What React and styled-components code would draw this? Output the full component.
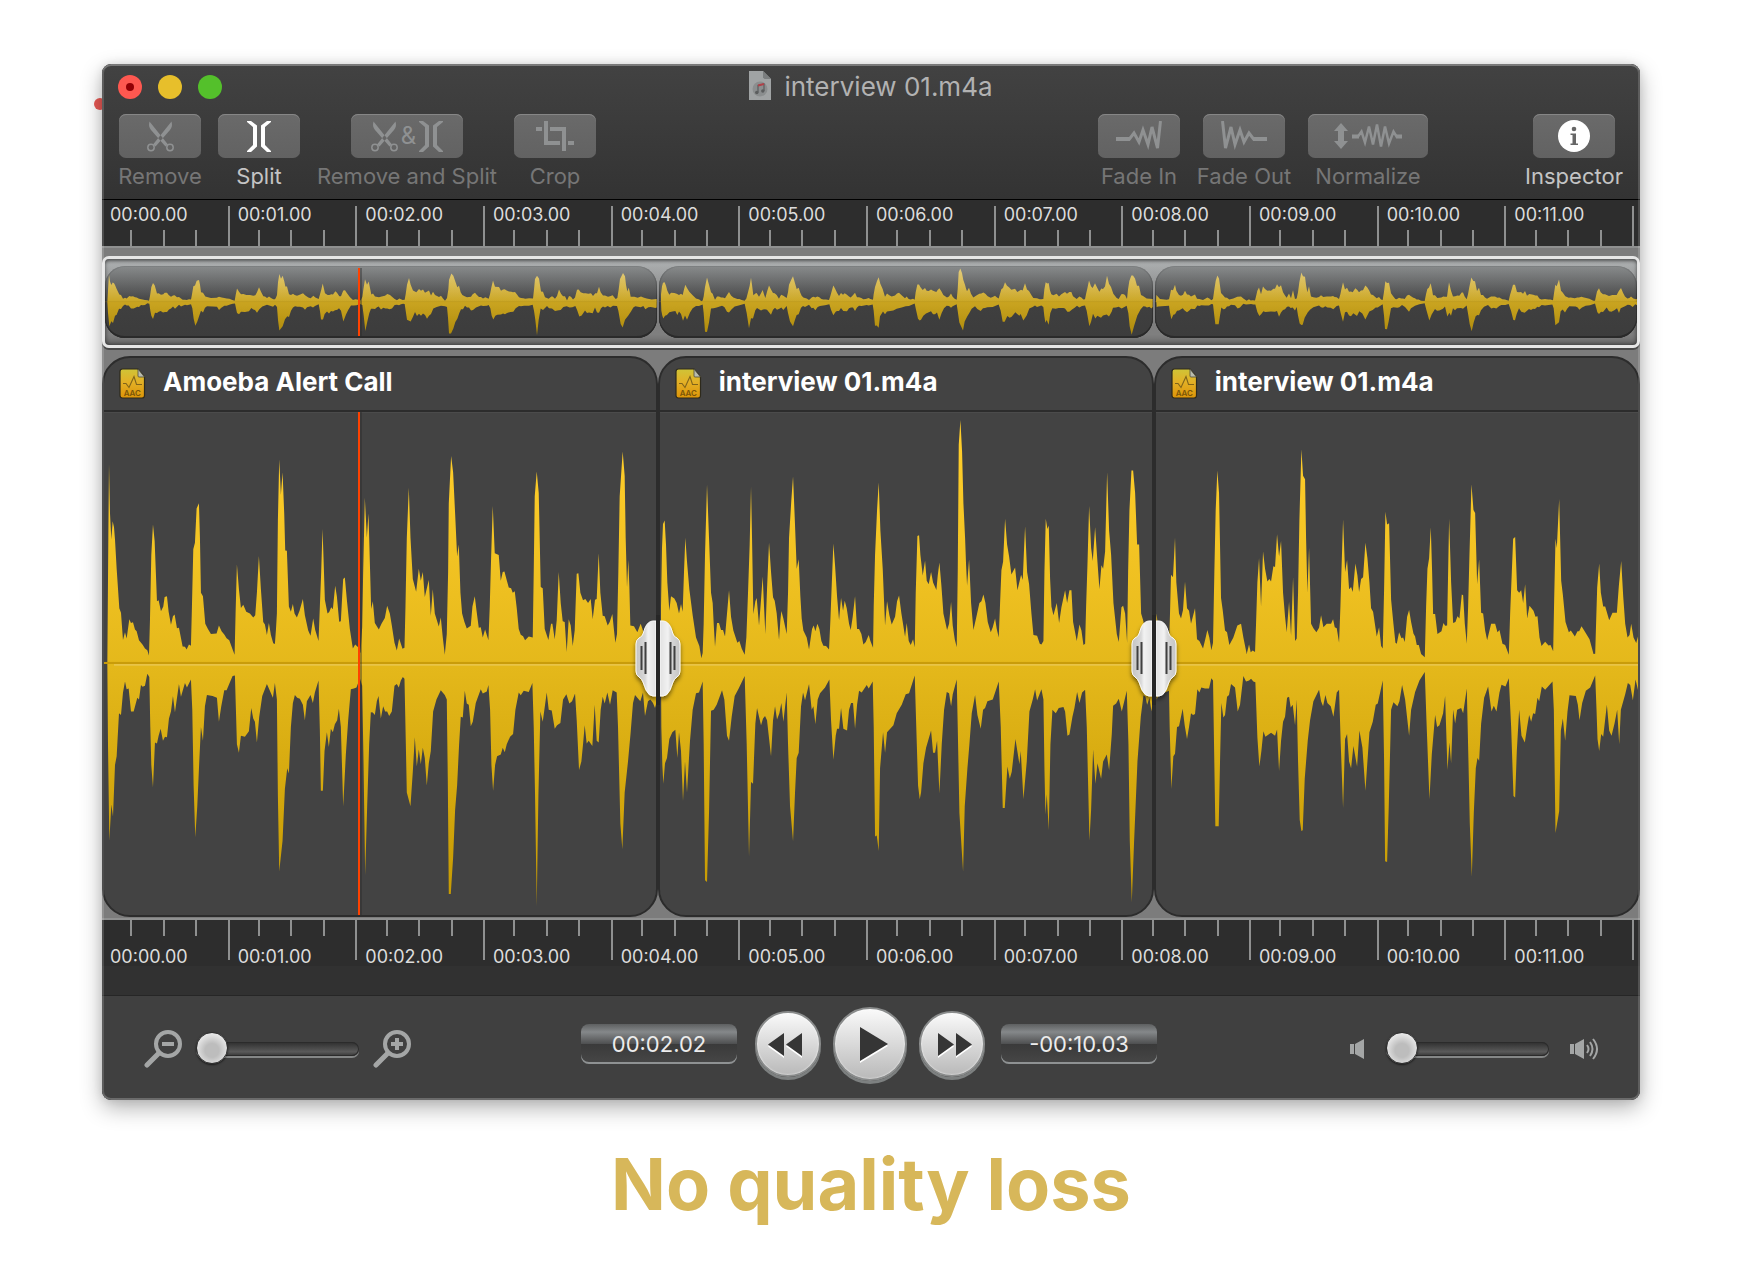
import React from "react";
import styled, { createGlobalStyle } from "styled-components";

const GlobalStyle = createGlobalStyle`
  *, *::before, *::after { box-sizing: border-box; }
  body { margin: 0; background: #fff; font-family: Inter, "Liberation Sans", sans-serif; }
  button { font: inherit; color: inherit; padding: 0; border: 0; background: none; }
`;

/* ---------- waveform data ----------
   Envelope points as "x,y" pairs. Three x units make one pixel of timeline,
   the zero axis lies at y = 766. Each section adds its own x offset. */
const AXIS = 766;

const envelopes = [
  {
    top: [
      [-36, "52,766 55,400 57,187 60,330 64,405 68,352 72,370 75,405 80,490 88,605 93,618 99,697 105,675 110,693 118,637 123,648 129,646 135,667 140,672 147,698 158,711 165,722 172,727 177,742 180,640 184,450 189,362 194,410 201,585 206,582 213,614 220,600 224,572 231,570 236,615 243,653 249,628 254,623 261,663 267,662 278,716 285,717 290,725 297,710 303,714 306,600 310,434 315,415 320,315 327,300 330,400 333,560 339,570 346,650 354,665 363,680 380,678 387,655 395,672 403,681 410,692 418,698 427,722 434,740 437,620 441,478 447,550 453,604 460,595 469,615 480,620 490,632 496,625 501,560 507,453 513,550 520,645 525,652 531,683 537,648 543,683 550,707 555,709 558,670 561,620 564,350 568,172 573,275 578,210 583,330 586,437 591,438 597,600 603,615 609,593 614,620 621,632 629,612 639,578 645,625 655,670 662,685 670,635 676,668 686,700 690,600 694,500 698,375 701,460 705,580 713,620 718,616 724,602 729,608 736,540 741,570 748,644 753,643 757,570 760,520 765,516 771,580 780,665 789,722 796,710 805,718 812,736 817,660 820,500 825,284 831,400 836,330 840,470"],
      [804, "4,607 9,585 15,648 27,667 35,650 45,633 52,598 60,620 66,655 74,705 81,728 88,693 98,723 104,720 107,600 111,400 117,255 122,400 129,520 139,557 147,490 153,525 159,500 165,572 177,523 183,627 189,550 195,620 207,658 213,632 219,690 225,740 231,680 235,500 237,300 244,163 250,210 256,330 262,455 267,420 272,560 277,620 284,645 291,664 303,656 308,600 315,570 320,610 327,662 333,660 339,690 346,667 356,698 360,600 364,460 369,308 375,445 387,450 393,525 399,500 404,498 410,520 417,545 424,547 429,560 435,556 441,605 447,665 453,682 460,686 466,698 477,687 489,690 492,500 495,280 501,208 507,270 513,543 519,547 525,665 536,697 544,650 548,650 555,695 561,640 567,500 573,590 579,643 585,645 591,732 597,637 603,655 609,715 615,670 621,505 626,503 632,560 640,582 647,578 655,590 663,578 669,637 676,580 681,578 687,445 692,560 699,627 705,628 714,655 720,645 728,622 732,660 737,705 742,680 746,500 750,280 759,150 765,220 768,400 772,545 776,465 779,540 782,655 793,657 803,675 813,650 820,670 830,690 845,715 860,700"],
    ],
    bottom: [
      [-36, "52,766 54,1000 58,1280 64,1175 69,1210 75,1060 80,1035 87,910 93,915 99,850 105,818 110,840 116,838 123,905 131,905 142,865 147,870 153,828 158,833 165,830 172,795 178,805 181,950 184,1060 189,1125 195,995 201,998 206,975 212,955 219,990 225,978 231,980 237,925 243,905 249,860 255,907 267,825 273,862 285,822 291,835 303,812 307,900 311,1120 316,1270 322,1180 328,1050 333,950 339,990 345,890 351,857 368,860 381,865 387,935 394,890 403,843 410,843 420,820 428,802 435,800 438,900 441,1000 447,1025 453,975 465,978 477,962 484,895 490,925 495,935 501,995 508,920 517,860 531,825 538,840 549,865 555,822 561,870 564,1150 568,1370 578,1280 585,1130 592,1070 597,1085 603,950 609,880 615,857 622,865 630,868 639,885 645,930 651,875 662,857 669,880 675,850 686,815 690,960 693,1135 699,1135 704,1020 711,965 717,1008 723,955 729,965 735,942 742,930 747,897 753,950 760,1180 768,1030 775,930 783,840 792,838 800,835 810,808 817,830 821,1050 826,1380 832,1180 838,1000 843,907 849,908"],
      [804, "15,915 21,875 26,860 33,925 40,890 46,905 52,905 58,918 66,905 74,830 81,825 87,835 93,815 99,805 104,810 107,950 111,1140 122,1180 129,1080 135,980 141,1065 147,1015 153,1058 159,1010 165,1040 171,1120 177,1055 183,1020 190,905 200,870 213,843 225,857 231,870 234,1100 237,1435 243,1435 250,1330 256,1190 262,1120 268,1000 273,920 279,922 285,845 291,882 297,885 303,948 309,935 318,880 333,840 339,853 351,847 356,828 361,900 365,1060 370,1135 376,1060 382,1035 393,1030 399,1010 405,1023 411,1000 421,978 430,970 437,900 447,850 453,858 462,845 477,848 488,822 492,950 496,1150 501,1470 506,1150 512,905 519,935 531,850 537,900 546,902 555,955 562,945 572,938 580,870 590,855 599,882 607,875 616,853 621,930 628,1075 635,1050 640,1000 645,945 651,998 657,990 668,1005 675,885 681,990 687,995 693,900 699,862 705,882 713,850 721,885 729,843 741,850 745,950 752,1230 758,1305 765,1140 775,1050 783,965 790,880 796,857 812,875 820,850 826,918 835,875 842,870 850,880 856,895 860,880"],
    ],
  },
  {
    top: [
      [1614, "63,766 63,600 66,430 69,360 74,350 78,420 82,530 88,612 93,570 103,577 110,590 117,620 123,593 128,615 132,500 136,400 141,470 148,550 158,625 168,690 178,715 184,750 188,735 191,650 195,450 201,246 207,400 213,560 218,590 221,650 225,717 231,648 237,648 243,668 249,668 255,687 261,620 267,553 273,630 280,670 292,705 298,700 305,722 314,740 319,690 324,560 329,420 333,253 336,400 340,622 346,585 350,575 357,655 363,580 368,513 372,600 376,680 381,550 387,415 393,500 399,573 404,583 410,620 417,697 421,640 424,613 430,635 440,680 444,560 447,400 454,290 459,222 464,340 470,490 476,463 481,570 485,635 490,670 500,690 507,725 516,665 521,655 526,672 532,650 538,665 544,700 550,714 558,715 567,725 571,640 575,540 580,417 585,480 591,570 597,640 603,575 609,612 614,583 620,605 627,650 632,668 638,630 645,570 651,665 657,665 664,680 670,710 677,703 686,683 691,700 699,720 701,600 705,450 711,320 716,240 721,380 728,490 735,655 741,585 748,625 755,652 765,630 771,585 777,568 784,620 795,688 800,648 806,700 812,712 819,695"],
      [2394, "44,718 47,560 52,395 57,393 61,450 68,510 75,467 80,525 86,535 93,500 99,530 109,552 113,510 118,472 124,540 130,620 141,668 147,650 153,587 158,655 164,695 170,718 173,500 176,130 181,58 186,150 190,300 195,400 198,480 201,540 207,463 213,590 220,668 229,630 238,590 244,585 250,565 256,590 263,645 272,675 278,660 285,635 290,665 296,690 300,590 304,495 309,470 315,345 321,420 327,455 334,507 345,487 352,553 363,508 368,523 372,430 375,367 381,500 387,535 394,620 400,683 411,685 419,708 424,710 430,700 433,500 437,345 442,375 446,365 450,520 454,600 460,625 470,590 477,648 484,602 495,553 501,590 508,553 514,553 519,645 530,700 538,652 544,670 550,712 555,708 558,600 562,480 567,308 573,430 578,468 585,370 592,470 598,550 604,480 609,490 615,440 621,210 627,380 633,450 640,590 650,680 656,703 661,640 664,602 669,598 675,620 681,705 684,500 688,320 694,205 699,205 705,270 711,420 717,420 723,620 729,640 740,690 758,700"],
    ],
    bottom: [
      [1614, "63,766 64,950 67,1060 70,1115 75,1055 81,1040 88,985 97,965 106,958 112,1040 117,965 123,1020 129,1165 135,1050 141,1140 150,990 158,900 168,852 177,850 188,818 191,1000 195,1395 201,1400 207,1200 213,903 221,900 230,885 246,843 253,870 261,975 267,990 275,920 284,860 296,838 314,802 320,1000 327,1325 333,1110 339,1115 346,940 351,895 357,920 363,945 369,925 375,918 381,930 393,1035 399,930 405,890 411,928 418,910 424,880 430,935 440,850 444,1000 450,1180 459,1282 465,1140 470,1040 476,1025 483,890 489,850 495,872 507,825 515,900 520,890 526,942 533,870 540,852 555,835 568,812 573,930 580,1045 587,975 591,955 597,955 603,895 610,955 621,960 627,900 633,880 639,880 645,955 651,885 657,845 665,850 680,828 686,838 698,818 701,950 705,1268 710,1265 716,1310 720,1070 729,965 735,1025 741,965 760,945 770,910 785,885 797,855 807,852"],
      [2394, "44,800 48,930 54,1120 59,1160 63,1140 70,1055 78,1010 93,960 99,1025 105,1025 111,990 118,1143 125,1000 132,900 140,848 147,852 153,890 158,855 170,812 173,950 178,1200 189,1370 194,1180 202,1070 208,1000 215,910 225,857 232,915 242,955 249,900 255,895 262,875 278,870 296,818 302,950 308,1185 314,1185 322,1065 329,1100 335,1080 346,985 358,1058 362,1020 370,1160 380,1050 388,905 398,870 405,840 411,873 424,840 430,870 433,1070 436,1205 440,1145 446,1250 451,1000 457,900 467,910 476,895 490,892 495,905 502,975 508,972 517,920 523,895 531,848 538,880 546,850 555,842 560,950 568,1280 573,1190 579,1015 586,1115 592,1055 603,1100 609,1050 620,1030 627,1075 635,970 639,888 648,882 656,868 665,905 680,845 685,1000 689,1280 695,1460 702,1280 712,1050 722,920 730,858 736,862 741,885 748,865 754,905 758,870"],
    ],
  },
  {
    top: [
      [3084, "78,766 79,620 82,640 90,700 110,720 117,710 120,620 123,508 129,515 135,400 139,530 147,620 153,635 159,610 165,528 171,605 177,612 183,650 195,605 201,695 208,700 219,722 227,690 232,668 238,690 244,727 249,705 253,500 257,320 262,205 267,270 273,575 278,610 285,670 291,675 298,712 310,690 322,655 333,650 340,690 350,738 357,710 362,733 368,728 375,732 378,650 382,530 387,460 393,600 399,440 405,490 412,527 418,520 423,527 430,483 435,485 441,390 447,455 453,410 459,560 465,630 470,675 477,587 483,685 489,515 495,700 500,693 504,560 508,350 514,143 519,220 525,230 528,400 532,560 537,430 543,650 550,663 559,675 567,662 573,625 580,660 590,650 603,650 609,637 614,660 620,663 627,705 631,600 634,500 639,347 645,500 651,465 657,550 663,543 668,558 676,475 682,510 687,558 693,520 699,515 706,415 712,460 718,530 723,605 729,615 740,687 747,660 753,715 758,722 762,550"],
      [3834, "16,325 21,362 27,358 33,580 40,650 46,705 50,708 57,675 64,692 69,690 74,703 81,630 87,610 93,645 100,678 105,687 110,712 116,712 123,738 134,747 138,600 142,490 147,460 152,370 156,500 159,622 165,622 172,680 184,672 190,648 195,656 201,655 204,500 207,345 213,530 219,648 226,645 232,628 238,635 245,565 249,567 254,650 260,708 264,600 268,450 274,245 280,320 285,328 291,535 297,463 303,618 309,620 315,670 321,698 333,650 345,650 352,675 358,668 367,708 375,712 386,740 390,620 395,500 399,403 405,398 411,553 417,560 423,553 429,590 435,535 441,635 448,598 460,612 466,630 472,628 478,690 484,715 495,702 505,713 511,712 519,730 522,580 526,403 530,430 537,288 543,525 548,565 556,645 566,675 572,670 584,687 592,672 597,672 604,657 612,670 628,695 640,738 645,737 648,640 651,545 657,475 662,560 669,600 675,600 687,640 697,618 710,618 716,540 723,468 729,570 735,650 742,690 748,683 753,650 760,690 768,706 774,685"],
    ],
    bottom: [
      [3084, "79,766 80,870 85,860 105,850 117,845 119,950 124,1130 130,1035 135,1028 141,950 147,948 158,897 164,945 171,985 177,950 183,910 189,915 195,912 202,840 208,850 214,835 225,838 237,838 244,808 249,815 252,1000 256,1238 266,1238 270,1050 274,880 280,922 285,915 291,862 297,857 303,825 315,835 323,905 330,885 340,802 348,818 357,815 363,810 370,818 376,820 382,980 388,1065 394,1020 400,962 406,978 423,967 435,975 441,957 447,1078 453,990 459,935 465,920 471,865 477,862 482,893 488,885 495,945 500,870 504,1050 509,1220 514,1252 518,1250 524,1100 533,990 540,930 550,875 567,842 573,875 579,890 586,857 592,880 602,890 610,920 620,850 627,842 632,1000 639,1185 645,985 651,970 657,1050 663,1070 670,1005 681,1065 688,960 697,1010 706,1135 712,1050 718,965 728,935 737,885 743,882"],
      [3834, "8,815 12,1050 15,1340 21,1342 26,1180 33,900 40,878 52,890 58,875 66,828 75,870 87,975 93,900 105,848 118,815 134,790 139,930 148,1160 155,1030 165,915 171,950 178,945 189,910 195,860 202,1075 208,995 213,1055 219,900 225,940 231,900 243,895 249,910 260,838 265,1050 269,1230 275,1385 281,1200 287,1070 292,1040 297,1048 303,940 312,865 324,832 334,905 341,888 349,905 358,850 364,827 376,832 386,808 393,950 400,1150 405,1155 410,1020 417,900 424,975 434,995 441,950 447,915 453,935 459,910 465,912 472,865 477,875 485,832 495,842 517,818 521,900 526,1258 537,1195 542,960 548,925 555,990 562,905 568,858 587,860 593,885 598,930 606,880 617,845 630,835 645,800 649,900 652,985 657,1020 663,970 669,978 680,885 687,960 694,975 703,940 711,900 717,1000 722,900 735,855 743,822 750,828 758,872 766,812 774,845"],
    ],
  },
];

const readSections = (sections) =>
  sections.flatMap(([offset, text]) =>
    text.split(" ").map((pair) => {
      const [x, y] = pair.split(",").map(Number);
      return [x + offset, y];
    })
  );

const outline = ({ top, bottom }) => {
  const upper = readSections(top);
  const lower = readSections(bottom).reverse();
  return [...upper, [lower[0][0], AXIS], ...lower].map((p) => p.join(",")).join(" ");
};

const clips = [
  { id: "a", name: "Amoeba Alert Call", grow: 556, view: [6, 1656], mini: [9, 1656], miniGrow: 552 },
  { id: "b", name: "interview 01.m4a", grow: 496, view: [1674, 1476], mini: [1671, 1482], miniGrow: 494 },
  { id: "c", name: "interview 01.m4a", grow: 486, view: [3162, 1446], mini: [3159, 1446], miniGrow: 482 },
].map((clip, i) => ({ ...clip, points: outline(envelopes[i]) }));

const seconds = Array.from({ length: 12 }, (_, i) => `00:${String(i).padStart(2, "0")}.00`);

/* ---------- page and window ---------- */
const Page = styled.main`
  padding: 64px 100px 0 102px;
`;
const Stage = styled.div`
  position: relative;
`;
const StrayDot = styled.span`
  position: absolute;
  left: -8px;
  top: 34px;
  width: 12px;
  height: 12px;
  border-radius: 50%;
  background: #ea5a55;
`;
const Window = styled.section`
  position: relative;
  overflow: hidden;
  border-radius: 9px;
  background: #3f3f3f;
  box-shadow: 0 8px 22px rgba(0, 0, 0, 0.3), 0 0 10px rgba(0, 0, 0, 0.1);
  &::after {
    content: "";
    position: absolute;
    inset: 0;
    border-radius: 9px;
    box-shadow: inset 0 0 0 2px rgba(255, 255, 255, 0.16), inset 0 2px 0 rgba(255, 255, 255, 0.16),
      inset 0 -2px 0 rgba(255, 255, 255, 0.08);
    pointer-events: none;
    z-index: 5;
  }
`;
const Header = styled.header`
  padding: 7px 0 10px;
  border-bottom: 1px solid #000;
  background: linear-gradient(#424242, #333);
`;
const TitleRow = styled.div`
  display: grid;
  grid-template-columns: 1fr auto 1fr;
  align-items: center;
  height: 30px;
  padding: 0 16px;
`;
const Lights = styled.div`
  display: flex;
  gap: 16px;
`;
const Light = styled.button`
  display: grid;
  place-items: center;
  width: 24px;
  height: 24px;
  border-radius: 50%;
  background: ${(p) => p.$color};
  &::before {
    content: "";
    width: 8px;
    height: 8px;
    border-radius: 50%;
    background: ${(p) => p.$dot || "transparent"};
  }
`;
const Title = styled.h1`
  display: flex;
  align-items: flex-start;
  gap: 13px;
  margin: 0;
  font-size: 26px;
  line-height: 32px;
  font-weight: 400;
  color: #b2b2b2;
`;

/* ---------- toolbar ---------- */
const Toolbar = styled.div`
  display: flex;
  justify-content: space-between;
  margin-top: 13px;
  padding: 0 17px;
`;
const ToolGroup = styled.div`
  display: flex;
  gap: 17px;
`;
const Tool = styled.button`
  display: flex;
  flex-direction: column;
  align-items: center;
  gap: 5px;
  width: ${(p) => p.$width}px;
  margin-left: ${(p) => (p.$apart ? 80 : 0)}px;
  font-size: 22px;
  line-height: 26px;
  white-space: nowrap;
  color: ${(p) => (p.disabled ? "#767676" : "#c4c4c4")};
`;
const Face = styled.span`
  display: flex;
  align-items: center;
  justify-content: center;
  gap: 3px;
  width: ${(p) => p.$width}px;
  height: 44px;
  border-radius: 7px;
  background: linear-gradient(#6a6a6a, #626262);
  box-shadow: inset 0 1px 0 #868686;
  font-size: 24px;
  color: ${(p) => (p.$active ? "#fff" : "#8f9192")};
`;

/* ---------- rulers ---------- */
const Ruler = styled.div`
  display: grid;
  grid-template-columns: repeat(12, 16fr) 1fr;
  margin-left: -2px;
  padding: ${(p) => (p.$flip ? "0 0 6px" : "6px 0 0")};
  background: #2d2d2d;
  border-style: solid;
  border-color: #8f9090;
  border-width: ${(p) => (p.$flip ? "2px 0 0" : "0 0 2px")};
`;
const Second = styled.div`
  display: flex;
  flex-direction: ${(p) => (p.$flip ? "column-reverse" : "column")};
  justify-content: space-between;
  height: 40px;
  border-left: 2px solid #8f9090;
`;
const Stamp = styled.span`
  padding-left: 8px;
  margin-bottom: ${(p) => (p.$flip ? -6 : 0)}px;
  font-size: 18px;
  line-height: 18px;
  color: #dcdcdc;
`;
const Quarters = styled.div`
  display: grid;
  grid-template-columns: repeat(4, 1fr);
  height: 16px;
  margin-left: -4px;
`;
const Quarter = styled.i`
  border-left: 2px solid #8f9090;
  &:first-child { border-color: transparent; }
`;
const RulerFoot = styled.div`
  height: 30px;
  background: #313131;
  border-bottom: 1px solid #262626;
`;

/* ---------- timeline ---------- */
const Timeline = styled.div`
  display: flex;
  flex-direction: column;
  gap: 8px;
  padding: 8px 0 1px;
  background: #7c7c7c;
`;
const Overview = styled.div`
  position: relative;
  display: flex;
  gap: 2px;
  padding: 7px 0;
  border: 3px solid #e6e6e6;
  border-radius: 7px;
  background: linear-gradient(#7c7c7c 0%, #7f7f7f 88%, #686868 100%);
  box-shadow: 0 2px 0 #484848, inset 0 0 5px rgba(0, 0, 0, 0.6);
  &::after {
    content: "";
    position: absolute;
    inset: 0 0 50% 0;
    border-radius: 4px 4px 0 0;
    background: linear-gradient(rgba(222, 228, 230, 0.36), rgba(222, 228, 230, 0.46) 14%, rgba(222, 228, 230, 0.02));
    box-shadow: inset 0 2px 3px rgba(0, 0, 0, 0.35);
    pointer-events: none;
  }
`;
const MiniClip = styled.div`
  flex: ${(p) => p.$grow} 1 0;
  height: 72px;
  border-radius: 20px;
  background: linear-gradient(#434343, #3c3c3c);
  box-shadow: inset 0 -2px 0 #2a2a2a, inset 0 0 0 1px #303030;
`;
const Wave = styled.svg`
  display: block;
  width: 100%;
  height: 100%;
  opacity: ${(p) => p.$opacity || 1};
`;
const Playhead = styled.i`
  position: absolute;
  z-index: 1;
  left: ${(p) => p.$at};
  top: ${(p) => p.$inset}px;
  bottom: ${(p) => p.$inset}px;
  width: 2px;
  background: #ff4200;
  box-shadow: 2px 0 0 rgba(40, 40, 40, 0.4);
`;
const Clips = styled.div`
  display: flex;
`;
const Clip = styled.article`
  position: relative;
  flex: ${(p) => p.$grow} 1 0;
  border: 2px solid #2c2c2c;
  border-radius: 28px;
  background: #434343;
`;
const ClipHeader = styled.div`
  display: flex;
  align-items: center;
  gap: 17px;
  height: 54px;
  padding: 0 0 2px 15px;
  border-bottom: 2px solid #2c2c2c;
`;
const ClipName = styled.h2`
  margin: 0;
  padding-bottom: 2px;
  font-size: 26px;
  line-height: 30px;
  font-weight: 700;
  color: #fff;
`;
const ClipBody = styled.div`
  position: relative;
  height: 503px;
  border-radius: 0 0 26px 26px;
  box-shadow: inset 0 1px 0 #4b4b4b;
`;
const Grip = styled.button`
  position: absolute;
  z-index: 3;
  left: -30px;
  top: 257px;
  width: 56px;
  height: 90px;
`;

/* ---------- transport ---------- */
const Transport = styled.footer`
  display: grid;
  grid-template-columns: 1fr auto 1fr;
  align-items: center;
  height: 104px;
  padding: 0 41px 8px 42px;
  background: #404040;
`;
const SliderGroup = styled.div`
  display: flex;
  align-items: center;
  justify-content: ${(p) => (p.$end ? "flex-end" : "flex-start")};
  gap: ${(p) => (p.$end ? 21 : 14)}px;
  padding-top: 10px;
`;
const Slider = styled.input`
  appearance: none;
  width: 163px;
  height: 32px;
  margin: 0;
  background: none;
  &::-webkit-slider-runnable-track {
    height: 14px;
    border-radius: 7px;
    background: linear-gradient(#2e2e2e, #5a5a5a 70%, #353535);
    box-shadow: inset 0 0 0 1px #2b2b2b, 0 2px 0 #858787;
  }
  &::-webkit-slider-thumb {
    appearance: none;
    width: 32px;
    height: 32px;
    margin-top: -10px;
    border-radius: 50%;
    border: 1px solid #2f2f2f;
    background: radial-gradient(circle at 50% 58%, #bdbdbd 30%, #dedede 62%, #fff);
    box-shadow: 0 1px 2px rgba(0, 0, 0, 0.6);
  }
`;
const Center = styled.div`
  display: flex;
  align-items: center;
  gap: 12px;
  margin-right: 5px;
`;
const Time = styled.output`
  width: 156px;
  height: 40px;
  margin: 0 ${(p) => (p.$last ? 0 : 6)}px 0 ${(p) => (p.$last ? 4 : 0)}px;
  border-radius: 8px;
  background: linear-gradient(#5e6061, #85888a 20%, #4e4f50 50%, #3a3a3a 51%, #474747);
  box-shadow: inset 0 -2px 0 #8f9293;
  text-align: center;
  font-size: 22px;
  line-height: 40px;
  color: #ececec;
`;
const RoundButton = styled.button`
  display: grid;
  place-items: center;
  width: ${(p) => p.$size}px;
  height: ${(p) => p.$size}px;
  border: 2px solid #8a8c8c;
  border-radius: 50%;
  background: linear-gradient(#fafafa, #b9b9b9);
  box-shadow: 0 3px 0 #7d8080, inset 0 0 2px #fff;
`;
const Caption = styled.p`
  margin: 40px 0 0;
  text-align: center;
  font-size: 72px;
  line-height: 88px;
  font-weight: 700;
  color: #d7b75a;
`;

/* ---------- drawings ---------- */
const Scissors = () => (
  <svg width="27" height="31" viewBox="0 0 27 31" fill="none" aria-hidden="true">
    <path d="M2.500.5C1.500 4 2 6.500 4 9L18.500 25.500l2.500-2zM24.500.5c1 3.500.5 6-1.500 8.500L8.500 25.500l-2.500-2z" fill="currentColor" />
    <circle cx="4" cy="26.500" r="3.200" stroke="currentColor" strokeWidth="1.500" />
    <circle cx="23" cy="26.500" r="3.200" stroke="currentColor" strokeWidth="1.500" />
  </svg>
);
const Brackets = () => (
  <svg width="24" height="31" viewBox="0 0 24 31" fill="currentColor" aria-hidden="true">
    <path d="M0 0h4l6 4.500v21L4 31H0v-1l6-6V6L0 1zM24 0h-4l-6 4.500v21l6 5.500h4v-1l-6-6V6l6-5z" />
  </svg>
);
const CropIcon = () => (
  <svg width="38" height="30" viewBox="0 0 38 30" fill="currentColor" aria-hidden="true">
    <path d="M0 6h6v4H0zM8 0h4v20h12v4H8zM14 6h16v24h-4V10H14zM32 20h6v4h-6z" />
  </svg>
);
const FadeIcon = ({ out }) => (
  <svg width="46" height="31" viewBox="0 0 46 31" fill="none" stroke="currentColor" aria-hidden="true">
    <g transform={out ? "matrix(-1 0 0 1 46 0)" : undefined}>
      <path d="M0 18h13.500l4.500-6 5 9 4-12 5 14.500L36 6l5.500 21L44.500 0" strokeWidth="3" />
      <path d="M0 18h14" strokeWidth="4" />
    </g>
  </svg>
);
const NormalizeIcon = () => (
  <svg width="68" height="31" viewBox="0 0 68 31" fill="none" aria-hidden="true">
    <path d="M7 2l7 8h-4v10h4l-7 8-7-8h4V10H0z" fill="currentColor" />
    <path d="M18 15.500h6l3.500-5 3.500 11 4-16 4 18 4-20 4 22 4-20 4 17 4.500-12 3 5H68" stroke="currentColor" strokeWidth="2.500" />
    <path d="M18 15.500h7M62 15.500h6" stroke="currentColor" strokeWidth="4" />
  </svg>
);
const InfoIcon = () => (
  <svg width="32" height="32" viewBox="0 0 32 32" aria-hidden="true">
    <circle cx="16" cy="16" r="16" fill="#fff" />
    <g fill="#666">
      <circle cx="16" cy="9" r="2.300" />
      <path d="M12.500 13.500h5.500V23.500H20V25H12.500V23.500H14.500V15H12.500z" />
    </g>
  </svg>
);
const DocumentIcon = () => (
  <svg width="22" height="29" viewBox="0 0 22 29" aria-hidden="true">
    <path d="M0 0h14l8 8v21H0z" fill="#a0a3a4" />
    <path d="M14 0l8 8h-6.500L14 6.500z" fill="#7b7e7f" />
    <circle cx="11" cy="18" r="7.500" fill="#8b8e8f" />
    <path d="M9 21.500v-7l6-1.500v7" stroke="#5b5d5e" strokeWidth="1.200" fill="none" />
    <path d="M9 14.500l6-1.500" stroke="#b04048" strokeWidth="2" />
    <circle cx="7.800" cy="21.500" r="1.700" fill="#5b5d5e" />
    <circle cx="13.800" cy="20" r="1.700" fill="#5b5d5e" />
  </svg>
);
const AacIcon = () => (
  <svg width="27" height="31" viewBox="0 0 27 31" aria-hidden="true">
    <defs>
      <linearGradient id="aac" x1="0" y1="0" x2="0" y2="1">
        <stop offset="0" stopColor="#cfc437" />
        <stop offset="0.45" stopColor="#e3b026" />
        <stop offset="1" stopColor="#dd9508" />
      </linearGradient>
    </defs>
    <path d="M3.500 1H19l6.500 8v18.500q0 2.500-2.500 2.500H3.500Q1 30 1 27.500v-24Q1 1 3.500 1z" fill="url(#aac)" stroke="#2e2a1c" strokeWidth="1.200" />
    <path d="M19 1l6.500 8H20q-1 0-1-1z" fill="#b9bcae" stroke="#4c4a3a" strokeWidth=".8" />
    <path d="M4 15.500h3l3 4 5-11 2.500 8H23" fill="none" stroke="#80641a" strokeWidth="1.100" />
    <text x="13.300" y="28" textAnchor="middle" fontFamily="Inter, sans-serif" fontSize="8" fontWeight="600" fill="#7a5508">AAC</text>
  </svg>
);
const GripIcon = () => (
  <svg width="56" height="90" viewBox="0 0 56 90" aria-hidden="true">
    <defs>
      <linearGradient id="gripHalf" x1="0" y1="0" x2="1" y2="0">
        <stop offset="0" stopColor="#c4c4c4" />
        <stop offset="0.45" stopColor="#d8d8d8" />
        <stop offset="0.6" stopColor="#f2f2f2" />
        <stop offset="1" stopColor="#e2e2e2" />
      </linearGradient>
      <filter id="gripShadow" x="-30%" y="-10%" width="160%" height="130%">
        <feDropShadow dx="0" dy="3" stdDeviation="2" floodColor="#000" floodOpacity=".5" />
      </filter>
    </defs>
    <g filter="url(#gripShadow)">
      {[undefined, "matrix(-1 0 0 1 56 0)"].map((flip) => (
        <g key={flip || "left"} transform={flip}>
          <path d="M26 6H23q-5 0-8 7l-2 6q-1 3-4 4-3 2-3 6v27q0 4 3 6 3 2 4 5l3 8q3 6 7 6h3z" fill="url(#gripHalf)" stroke="#fafafa" strokeWidth="1" />
          <path d="M11.500 31v24M15.500 27v32" stroke="#3f3f3f" strokeWidth="2" />
        </g>
      ))}
    </g>
    <path d="M28 0v90" stroke="#262626" strokeWidth="4" />
  </svg>
);
const MagnifierIcon = ({ plus }) => (
  <svg width="38" height="38" viewBox="0 0 38 38" fill="none" stroke="#a4a6a6" aria-hidden="true">
    <circle cx="24" cy="14" r="12" strokeWidth="4" />
    <path d="M15 23L3 35" strokeWidth="5" strokeLinecap="round" />
    <path d={plus ? "M18 14h12M24 8v12" : "M18 14h12"} strokeWidth="4" />
  </svg>
);
const SpeakerIcon = ({ loud }) => (
  <svg width={loud ? 29 : 15} height="22" viewBox={loud ? "0 0 29 22" : "0 0 15 22"} fill="none" aria-hidden="true">
    <path d="M0 6h4v10H0zM5 6l9-5v20l-9-5z" fill="#a4a6a6" />
    {loud && (
      <path d="M17 7q3 4 0 8M20 4q5 7 0 14M23 1q8 10 0 20" stroke="#a4a6a6" strokeWidth="2" />
    )}
  </svg>
);
const Glyph = ({ width, height, shape }) => (
  <svg width={width} height={height + 4} viewBox={`0 -2 ${width} ${height + 4}`} aria-hidden="true">
    <path d={shape} fill="#fff" transform="translate(0 2)" />
    <path d={shape} fill="#353535" />
  </svg>
);

const Waveform = ({ clip, range, y, height, opacity }) => {
  const [x, width] = range;
  const gradient = `wave-${clip.id}-${height}`;
  return (
    <Wave viewBox={`${x} ${y} ${width} ${height}`} preserveAspectRatio="none" $opacity={opacity} aria-hidden="true">
      <defs>
        <linearGradient id={gradient} gradientUnits="userSpaceOnUse" x1="0" y1="150" x2="0" y2="1450">
          <stop offset="0" stopColor="#ffcd2a" />
          <stop offset="0.48" stopColor="#e4b81b" />
          <stop offset="1" stopColor="#c69a02" />
        </linearGradient>
      </defs>
      <polygon points={clip.points} fill={`url(#${gradient})`} />
      <rect x={x} y="761" width={width} height="6" fill="#c99c0a" />
      {!opacity && <rect x={x + 30} y="767" width={width} height="5" fill="#e9c548" />}
    </Wave>
  );
};

const TimeRuler = ({ flip }) => (
  <Ruler $flip={flip}>
    {seconds.map((stamp) => (
      <Second key={stamp} $flip={flip}>
        <Stamp $flip={flip}>{stamp}</Stamp>
        <Quarters>
          <Quarter />
          <Quarter />
          <Quarter />
          <Quarter />
        </Quarters>
      </Second>
    ))}
    <Second />
  </Ruler>
);

const ToolItem = ({ label, width, face = 82, active, apart, children }) => (
  <Tool $width={width} $apart={apart} disabled={!active}>
    <Face $width={face} $active={active}>{children}</Face>
    <span>{label}</span>
  </Tool>
);

export default function App() {
  return (
    <Page>
      <GlobalStyle />
      <Stage>
        <StrayDot />
        <Window>
          <Header>
            <TitleRow>
              <Lights>
                <Light $color="#fe5850" $dot="#920005" aria-label="Close" />
                <Light $color="#e7bf2b" aria-label="Minimize" />
                <Light $color="#54c02b" aria-label="Zoom" />
              </Lights>
              <Title>
                <DocumentIcon />
                interview 01.m4a
              </Title>
            </TitleRow>
            <Toolbar>
              <ToolGroup>
                <ToolItem label="Remove" width={82}><Scissors /></ToolItem>
                <ToolItem label="Split" width={82} active><Brackets /></ToolItem>
                <ToolItem label="Remove and Split" width={180} face={112}>
                  <Scissors />&amp;<Brackets />
                </ToolItem>
                <ToolItem label="Crop" width={82}><CropIcon /></ToolItem>
              </ToolGroup>
              <ToolGroup>
                <ToolItem label="Fade In" width={82}><FadeIcon /></ToolItem>
                <ToolItem label="Fade Out" width={94}><FadeIcon out /></ToolItem>
                <ToolItem label="Normalize" width={120} face={120}><NormalizeIcon /></ToolItem>
                <ToolItem label="Inspector" width={98} active apart><InfoIcon /></ToolItem>
              </ToolGroup>
            </Toolbar>
          </Header>

          <TimeRuler />

          <Timeline>
            <Overview>
              {clips.map((clip) => (
                <MiniClip key={clip.id} $grow={clip.miniGrow}>
                  <Waveform clip={clip} range={clip.mini} y={3} height={1526} opacity={0.84} />
                </MiniClip>
              ))}
              <Playhead $at="16.5%" $inset={9} />
            </Overview>
            <Clips>
              {clips.map((clip, i) => (
                <Clip key={clip.id} $grow={clip.grow}>
                  <ClipHeader>
                    <AacIcon />
                    <ClipName>{clip.name}</ClipName>
                  </ClipHeader>
                  <ClipBody>
                    <Waveform clip={clip} range={clip.view} y={35} height={1461} />
                    {i === 0 && <Playhead $at="46%" $inset={0} />}
                  </ClipBody>
                  {i > 0 && <Grip aria-label="Move split point"><GripIcon /></Grip>}
                </Clip>
              ))}
            </Clips>
          </Timeline>

          <TimeRuler flip />
          <RulerFoot />

          <Transport>
            <SliderGroup>
              <MagnifierIcon />
              <Slider type="range" defaultValue={0} aria-label="Zoom level" />
              <MagnifierIcon plus />
            </SliderGroup>
            <Center>
              <Time>00:02.02</Time>
              <RoundButton $size={66} aria-label="Rewind">
                <Glyph width={40} height={23} shape="M16 0v23L0 11.500zM34 0v23L18 11.500z" />
              </RoundButton>
              <RoundButton $size={74} aria-label="Play">
                <Glyph width={36} height={34} shape="M8 0l28 17L8 34z" />
              </RoundButton>
              <RoundButton $size={66} aria-label="Fast forward">
                <Glyph width={40} height={23} shape="M6 0l16 11.500L6 23zM24 0l16 11.500L24 23z" />
              </RoundButton>
              <Time $last>-00:10.03</Time>
            </Center>
            <SliderGroup $end>
              <SpeakerIcon />
              <Slider type="range" defaultValue={0} aria-label="Volume" />
              <SpeakerIcon loud />
            </SliderGroup>
          </Transport>
        </Window>
      </Stage>
      <Caption>No quality loss</Caption>
    </Page>
  );
}
